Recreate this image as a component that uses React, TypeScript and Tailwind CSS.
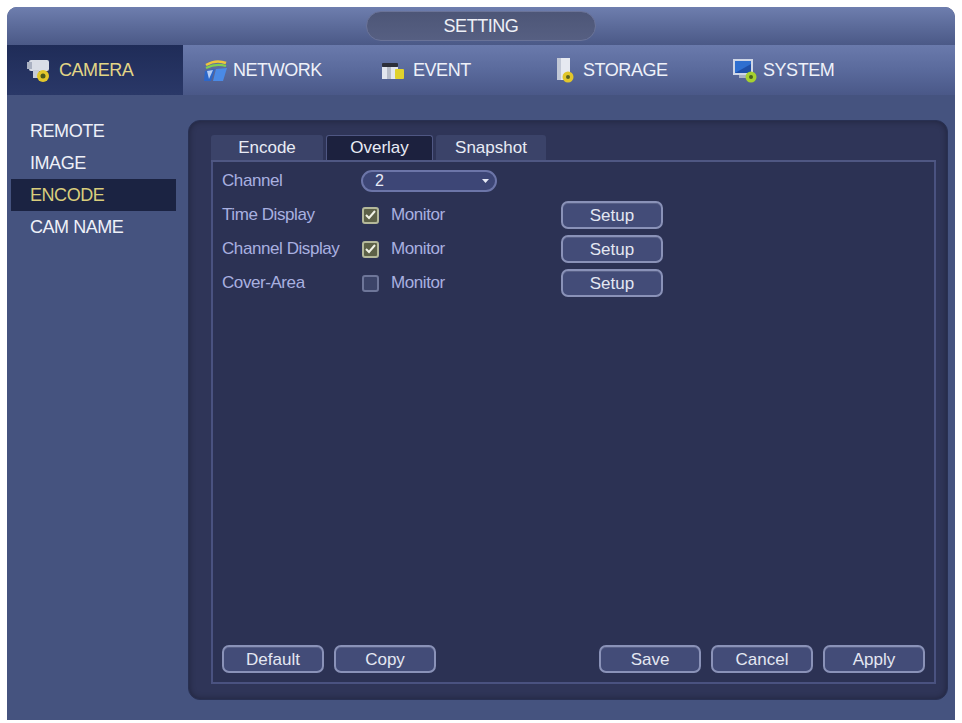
const navItems = [
  { key: "camera", label: "CAMERA" },
  { key: "network", label: "NETWORK" },
  { key: "event", label: "EVENT" },
  { key: "storage", label: "STORAGE" },
  { key: "system", label: "SYSTEM" },
];

const sideItems = ["REMOTE", "IMAGE", "ENCODE", "CAM NAME"];

const overlayRows = [
  { label: "Time Display", checked: true },
  { label: "Channel Display", checked: true },
  { label: "Cover-Area", checked: false },
];

function NavIcon({ name }: { name: string }) {
  if (name === "camera") {
    return (
      <svg width="30" height="28" viewBox="0 0 30 26">
        <rect x="2" y="3" width="20" height="11" rx="2" fill="#d9dde6" />
        <rect x="0" y="5" width="5" height="7" fill="#aab1c2" />
        <rect x="6" y="13" width="6" height="8" fill="#c7ccd8" />
        <circle cx="16" cy="19" r="6" fill="#e2c72b" />
        <circle cx="16" cy="19" r="2.5" fill="#4b5a1c" />
      </svg>
    );
  }
  if (name === "network") {
    return (
      <svg width="26" height="26" viewBox="0 0 26 26">
        <path d="M3 8 Q13 2 23 6" stroke="#f0c53a" strokeWidth="2.5" fill="none" />
        <path d="M3 11 Q13 6 23 9" stroke="#7fcf4f" strokeWidth="2" fill="none" />
        <path d="M2 14 L12 12 L8 24 L1 24 Z" fill="#2c67c9" />
        <path d="M13 12 L24 11 L20 24 L10 24 Z" fill="#4a8ae6" />
        <path d="M4 14 L10 13 L6 22 Z" fill="#dbe8ff" opacity="0.8" />
      </svg>
    );
  }
  if (name === "event") {
    return (
      <svg width="30" height="26" viewBox="0 0 30 26">
        <rect x="3" y="6" width="16" height="4" rx="1" fill="#2d2f3a" />
        <rect x="3" y="10" width="16" height="12" fill="#e3e6ee" />
        <rect x="8" y="10" width="4" height="12" fill="#b8bdc9" />
        <rect x="16" y="12" width="9" height="10" rx="1" fill="#e0d12c" />
      </svg>
    );
  }
  if (name === "storage") {
    return (
      <svg width="24" height="28" viewBox="0 0 24 28">
        <rect x="2" y="2" width="13" height="22" fill="#e6e9f1" />
        <rect x="2" y="2" width="4" height="22" fill="#c2c8d6" />
        <circle cx="13" cy="21" r="5.5" fill="#e2c72b" />
        <circle cx="13" cy="21" r="2" fill="#5a6222" />
      </svg>
    );
  }
  return (
    <svg width="28" height="28" viewBox="0 0 28 28">
      <rect x="2" y="3" width="20" height="16" fill="#cfd6e6" />
      <rect x="4" y="5" width="16" height="12" fill="#2f6fd0" />
      <path d="M4 17 L20 8 L20 17 Z" fill="#1f4fa8" />
      <rect x="8" y="19" width="8" height="3" fill="#aab2c4" />
      <circle cx="20" cy="21" r="5.5" fill="#a6d12f" />
      <circle cx="20" cy="21" r="2" fill="#49621d" />
    </svg>
  );
}

function Button({ label }: { label: string }) {
  return (
    <button className="w-[102px] h-[28px] rounded-[7px] border-2 border-[#8a92b8] bg-[#434c78] text-[17px] leading-none text-[#e4e7f2] shadow-[inset_0_1px_0_rgba(255,255,255,0.12)]">
      {label}
    </button>
  );
}

function CheckBox({ checked }: { checked: boolean }) {
  return (
    <span
      className={
        checked
          ? "flex items-center justify-center w-[17px] h-[17px] rounded-[3px] border-2 border-[#b4b89a] bg-[#5d6148]"
          : "flex items-center justify-center w-[17px] h-[17px] rounded-[3px] border-2 border-[#6e7699] bg-[#3c4468]"
      }
    >
      {checked && (
        <svg width="11" height="10" viewBox="0 0 11 10">
          <path d="M1 5 L4 8 L10 1" stroke="#f1f2e6" strokeWidth="2" fill="none" />
        </svg>
      )}
    </span>
  );
}

export default function App() {
  return (
    <div
      className="w-[962px] h-[723px] bg-white pt-[7px] px-[7px] pb-[3px]"
      style={{ fontFamily: '"Liberation Sans", Arial, sans-serif' }}
    >
      <div className="h-full flex flex-col rounded-t-[10px] overflow-hidden bg-[#45537f]">
        {/* title bar */}
        <div className="h-[38px] flex items-center justify-center bg-gradient-to-b from-[#6e7eae] to-[#4b5987]">
          <div className="w-[230px] h-[30px] rounded-full bg-gradient-to-b from-[#4d5677] to-[#565f82] border border-[#6a7398] flex items-center justify-center text-[18px] tracking-tight text-[#eef0f6]">
            SETTING
          </div>
        </div>

        {/* main nav */}
        <div className="h-[50px] flex bg-gradient-to-b from-[#6a7aac] via-[#5a6a9c] to-[#4a5888]">
          {navItems.map((item) => {
            const active = item.key === "camera";
            return (
              <div
                key={item.key}
                className={
                  active
                    ? "w-[176px] flex items-center gap-[2px] pl-[20px] bg-gradient-to-b from-[#1f2c58] to-[#2a3868]"
                    : "w-[176px] flex items-center gap-[4px] pl-[20px]"
                }
              >
                <NavIcon name={item.key} />
                <span
                  className={
                    active
                      ? "text-[18px] tracking-tight text-[#e3d686]"
                      : "text-[18px] tracking-tight text-[#eef1f9]"
                  }
                >
                  {item.label}
                </span>
              </div>
            );
          })}
        </div>

        {/* body */}
        <div className="flex-1 flex pb-[20px] pr-[7px]">
          <div className="w-[181px] pt-[20px] pl-[4px]">
            {sideItems.map((item) => {
              const active = item === "ENCODE";
              return (
                <div
                  key={item}
                  className={
                    active
                      ? "w-[165px] h-[32px] flex items-center pl-[19px] bg-[#1b2342] text-[18px] tracking-tight text-[#d9cd7c]"
                      : "w-[165px] h-[32px] flex items-center pl-[19px] text-[18px] tracking-tight text-[#eef0f8]"
                  }
                >
                  {item}
                </div>
              );
            })}
          </div>

          <div className="flex-1 mt-[25px] rounded-[12px] bg-[#2f3558] border border-[#283052] shadow-[inset_0_0_6px_rgba(0,0,0,0.35)] pt-[14px] pl-[22px] pr-[11px] pb-[15px] flex flex-col">
            {/* tabs */}
            <div className="flex gap-[3px] h-[27px] border-b-2 border-[#4f5783]">
              <div className="w-[112px] flex items-center justify-center bg-[#3b4369] rounded-t-[3px] text-[17px] text-[#e8ebf5]">
                Encode
              </div>
              <div className="w-[107px] flex items-center justify-center bg-[#1c213e] border border-b-0 border-[#4f5783] rounded-t-[3px] text-[17px] text-[#e8ebf5]">
                Overlay
              </div>
              <div className="w-[110px] flex items-center justify-center bg-[#3b4369] rounded-t-[3px] text-[17px] text-[#e8ebf5]">
                Snapshot
              </div>
            </div>

            {/* content */}
            <div className="flex-1 flex flex-col justify-between border-2 border-t-0 border-[#4a5280] bg-[#2c3254] pt-[2px] pl-[9px] pr-[9px] pb-[9px]">
              <div className="flex flex-col">
                <div className="h-[34px] flex items-center">
                  <span className="w-[139px] text-[17px] tracking-tight text-[#a9b0e0]">Channel</span>
                  <div className="w-[136px] h-[22px] rounded-full border-2 border-[#6c75a8] bg-[#3d4676] flex items-center justify-between pl-[12px] pr-[5px]">
                    <span className="text-[16px] text-[#e8ebf7]">2</span>
                    <svg width="9" height="6" viewBox="0 0 9 6">
                      <path d="M1 1 L8 1 L4.5 5 Z" fill="#e6e9f5" />
                    </svg>
                  </div>
                </div>
                {overlayRows.map((row) => (
                  <div key={row.label} className="h-[34px] flex items-center">
                    <span className="w-[140px] text-[17px] tracking-tight text-[#a9b0e0] whitespace-nowrap">
                      {row.label}
                    </span>
                    <div className="w-[199px] flex items-center gap-[12px]">
                      <CheckBox checked={row.checked} />
                      <span className="text-[17px] tracking-tight text-[#a9b0e0]">Monitor</span>
                    </div>
                    <Button label="Setup" />
                  </div>
                ))}
              </div>

              <div className="flex items-center justify-between">
                <div className="flex gap-[10px]">
                  <Button label="Default" />
                  <Button label="Copy" />
                </div>
                <div className="flex gap-[10px]">
                  <Button label="Save" />
                  <Button label="Cancel" />
                  <Button label="Apply" />
                </div>
              </div>
            </div>
          </div>
        </div>
      </div>
    </div>
  );
}
